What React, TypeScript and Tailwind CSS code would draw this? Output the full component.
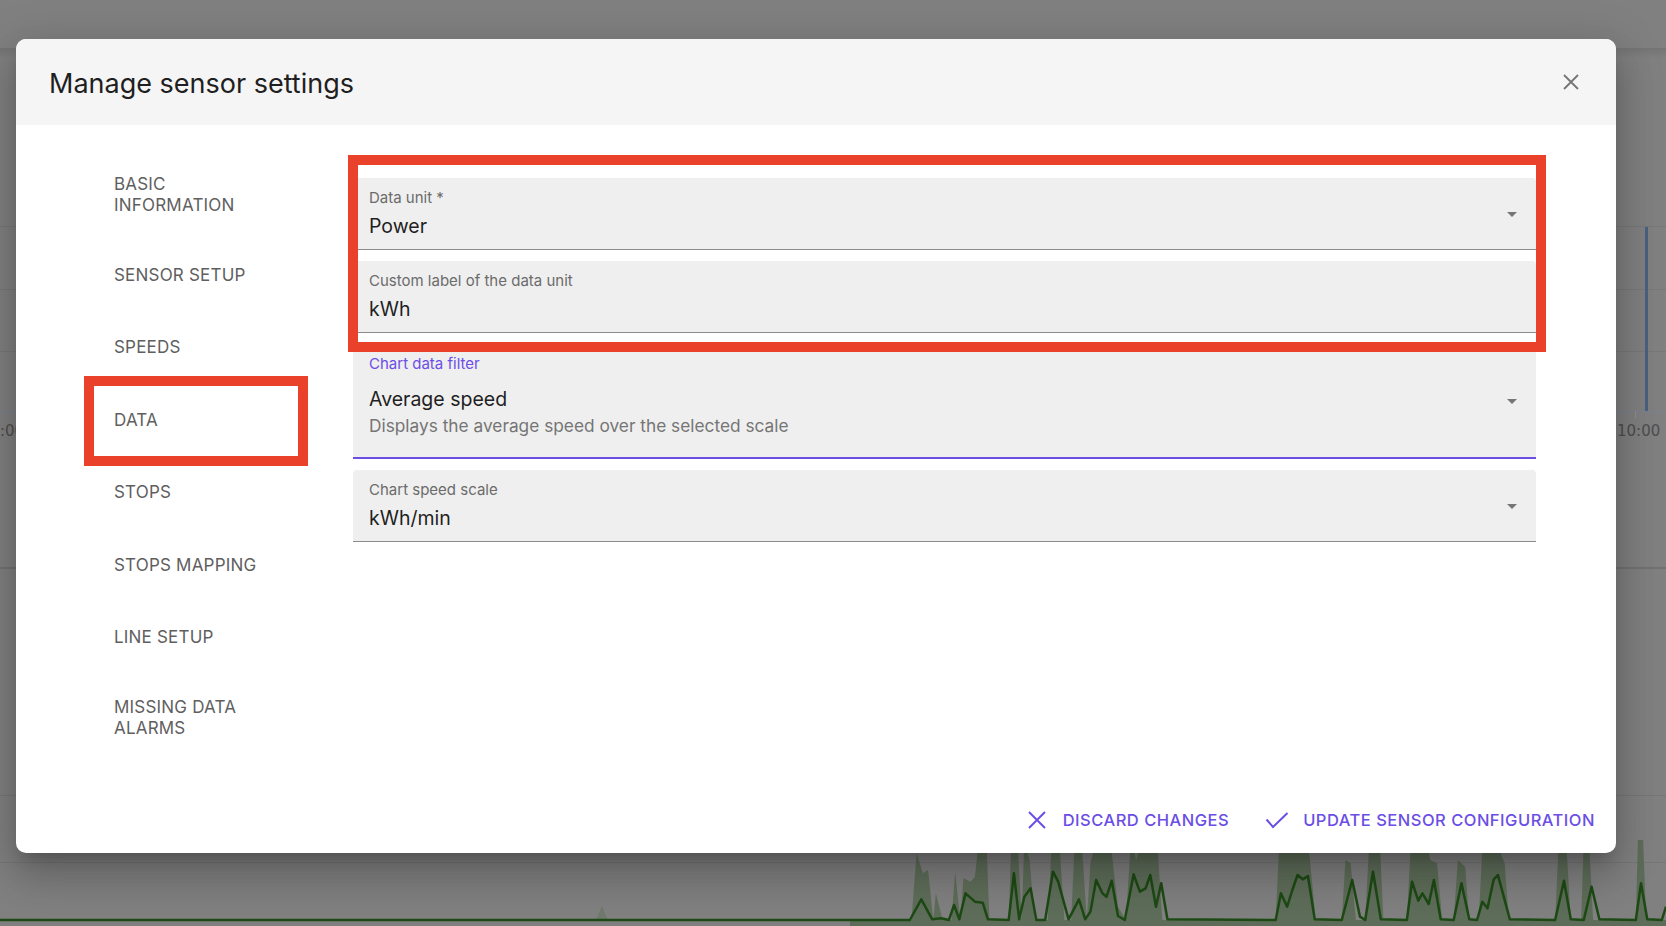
import React from "react";

const navItems = [
  "BASIC INFORMATION",
  "SENSOR SETUP",
  "SPEEDS",
  "DATA",
  "STOPS",
  "STOPS MAPPING",
  "LINE SETUP",
  "MISSING DATA ALARMS",
];

// chart line, in the coords of a 1568x258 box (scaled into 816x86)
const linePts: [number, number][] = [
  [0, 240], [115, 240], [137, 178], [158, 238], [175, 235], [190, 240], [200, 195], [210, 238], [222, 160], [240, 185],
  [255, 188], [265, 238], [305, 240], [315, 100], [325, 238], [335, 170], [347, 145], [358, 240], [375, 240], [390, 95],
  [400, 125], [420, 238], [440, 178], [452, 238], [462, 215], [473, 120], [485, 160], [493, 170], [503, 122], [515, 228],
  [528, 240], [545, 103], [557, 155], [568, 145], [577, 105], [588, 200], [598, 130], [610, 238], [818, 240], [828, 160],
  [840, 200], [850, 150], [860, 105], [870, 118], [880, 108], [893, 238], [945, 240], [965, 120], [980, 230], [990, 240],
  [1005, 95], [1020, 238], [1070, 240], [1080, 125], [1092, 182], [1100, 160], [1112, 192], [1122, 120], [1135, 238],
  [1160, 240], [1175, 130], [1190, 238], [1205, 240], [1215, 185], [1225, 205], [1237, 118], [1245, 105], [1268, 238],
  [1355, 240], [1372, 122], [1385, 238], [1410, 240], [1425, 140], [1440, 238], [1510, 240], [1520, 130], [1532, 238],
  [1560, 240], [1568, 200],
];

const fillPts: [number, number][] = [
  [0, 242], [118, 240], [128, 40], [140, 100], [150, 90], [160, 240], [165, 160], [178, 240], [195, 240], [202, 95],
  [212, 240], [218, 115], [232, 125], [240, 110], [248, 0], [262, 0], [268, 240], [305, 240], [310, 0], [322, 0],
  [330, 240], [335, 0], [345, 60], [355, 240], [380, 240], [388, 0], [402, 0], [412, 240], [425, 240], [432, 0],
  [445, 0], [455, 240], [462, 70], [470, 20], [480, 0], [492, 40], [500, 0], [515, 200], [530, 240], [540, 0],
  [550, 60], [560, 0], [590, 0], [600, 240], [818, 240], [825, 0], [880, 0], [895, 240], [945, 240], [952, 60],
  [962, 70], [972, 240], [990, 240], [998, 0], [1018, 0], [1025, 240], [1070, 240], [1078, 0], [1108, 0], [1115, 60],
  [1128, 70], [1138, 240], [1160, 240], [1168, 60], [1182, 80], [1190, 240], [1208, 240], [1216, 0], [1240, 0],
  [1258, 70], [1266, 240], [1355, 240], [1362, 0], [1376, 0], [1385, 240], [1405, 240], [1410, 0], [1420, 0],
  [1428, 240], [1510, 240], [1514, 0], [1524, 0], [1530, 240], [1568, 240], [1568, 258], [0, 258],
];

const toStr = (pts: [number, number][]) => pts.map((p) => p.join(",")).join(" ");

function DropArrow() {
  return (
    <svg width="24" height="24" viewBox="0 0 24 24" className="shrink-0">
      <path d="M7 10l5 5 5-5z" fill="#757575" />
    </svg>
  );
}

function Field({
  label,
  value,
  helper,
  focused,
  select,
}: {
  label: string;
  value: string;
  helper?: string;
  focused?: boolean;
  select?: boolean;
}) {
  return (
    <div
      className={
        "flex items-center rounded-t-[4px] bg-[#efefef] pl-4 pr-[12px] " +
        (focused ? "border-b-2 border-[#6b4ee6]" : "border-b border-[#8c8c8c]")
      }
    >
      <div className={"flex-1 pt-[10px] " + (helper ? "pb-[20px]" : "pb-[11px]")}>
        <div className={"text-[15px] leading-5 " + (focused ? "text-[#6b4ee6]" : "text-[#6b6b6b]")}>{label}</div>
        <div className={"text-[19.5px] leading-6 text-[#1f1f1f] " + (helper ? "mt-[13px]" : "mt-[6px]")}>{value}</div>
        {helper && <div className="text-[17.3px] leading-[22px] text-[#757575] mt-[4px]">{helper}</div>}
      </div>
      {select && <DropArrow />}
    </div>
  );
}

export default function App() {
  return (
    <div className="relative h-[926px] w-[1666px] overflow-hidden bg-[#808080] font-['Inter','Liberation_Sans',sans-serif]">
      {/* page behind the dialog */}
      <div className="absolute left-0 right-0 top-[48px] h-[10px] bg-gradient-to-b from-[#747474] to-[#808080]" />
      <div className="absolute left-0 right-0 top-[226px] h-px bg-[#787878]" />
      <div className="absolute left-0 right-0 top-[289px] h-px bg-[#787878]" />
      <div className="absolute left-0 right-0 top-[351px] h-px bg-[#787878]" />
      <div className="absolute left-0 right-0 top-[411px] h-px bg-[#7b8290]" />
      <div className="absolute left-[1635px] top-[411px] h-[8px] w-px bg-[#8e8e8e]" />
      <div className="absolute left-[1645px] top-[227px] h-[184px] w-[3px] bg-[#4b5f80]" />
      <div className="absolute left-[1617px] top-[420px] text-[15px] text-[#4e4e4e] font-['DejaVu_Sans',sans-serif]">10:00</div>
      <div className="absolute left-0 top-[420px] text-[15px] text-[#4e4e4e] font-['DejaVu_Sans',sans-serif]">:00</div>
      <div className="absolute left-0 right-0 top-[567px] h-[2px] bg-[#727272]" />
      <div className="absolute left-0 right-0 top-[795px] h-px bg-[#777777]" />
      <div className="absolute left-0 right-0 top-[862px] h-px bg-[#777777]" />
      <svg className="absolute left-0 top-[840px]" width="850" height="86" viewBox="0 0 850 86">
        <path d="M596 80 L602 66 L608 80 Z" fill="#6f7a6c" />
        <polyline points="0,80 850,80" fill="none" stroke="#1d4a14" strokeWidth="2.5" />
      </svg>
      <svg
        className="absolute left-[850px] top-[840px]"
        width="816"
        height="86"
        viewBox="0 0 1568 258"
        preserveAspectRatio="none"
      >
        <polygon points={toStr(fillPts)} fill="#5e6d59" />
        <polyline
          points={toStr(linePts)}
          fill="none"
          stroke="#1d4a14"
          strokeWidth="2.5"
          vectorEffect="non-scaling-stroke"
          strokeLinejoin="round"
        />
      </svg>

      {/* dialog */}
      <div className="absolute left-[16px] top-[39px] flex h-[814px] w-[1600px] flex-col overflow-hidden rounded-[10px] bg-white shadow-[0_11px_15px_-7px_rgba(0,0,0,0.2),0_24px_38px_3px_rgba(0,0,0,0.14),0_9px_46px_8px_rgba(0,0,0,0.12)]">
        <div className="flex h-[86px] shrink-0 items-center justify-between bg-[#f5f5f5] pl-[33px] pr-[33px]">
          <h2 className="pt-[4px] text-[27px] font-normal text-[#1f1f1f]">Manage sensor settings</h2>
          <button className="flex h-6 w-6 items-center justify-center">
            <svg width="24" height="24" viewBox="0 0 24 24">
              <path d="M5 5 L19 19 M19 5 L5 19" stroke="#757575" strokeWidth="1.8" />
            </svg>
          </button>
        </div>

        <div className="flex flex-1 pl-[80px] pr-[80px]">
          {/* side nav */}
          <nav className="w-[200px] shrink-0 pt-[26px]">
            {navItems.map((item) => (
              <div
                key={item}
                className="relative flex min-h-[72.5px] items-center py-[23px] pl-[18px] pr-6 text-[17px] leading-[21px] tracking-[0.2px] text-[#5f5f5f]"
              >
                <span className="max-w-[150px]">{item}</span>
                {item === "DATA" && (
                  <div className="pointer-events-none absolute -bottom-[9px] -left-[12px] -right-[12px] -top-[8px] border-[10px] border-[#e9412a]" />
                )}
              </div>
            ))}
          </nav>

          {/* fields */}
          <div className="relative ml-[57px] flex flex-1 flex-col gap-[11px] pt-[53px]">
            <Field label="Data unit *" value="Power" select />
            <Field label="Custom label of the data unit" value="kWh" />
            <Field
              label="Chart data filter"
              value="Average speed"
              helper="Displays the average speed over the selected scale"
              focused
              select
            />
            <Field label="Chart speed scale" value="kWh/min" select />
            <div className="pointer-events-none absolute left-[-5px] top-[30px] h-[197px] w-[1198px] border-[10px] border-[#e9412a]" />
          </div>
        </div>

        {/* footer */}
        <div className="flex shrink-0 items-center justify-end gap-[36px] pb-[15px] pr-[21px]">
          <button className="flex h-9 items-center gap-[14px] text-[16.5px] font-medium tracking-[0.5px] text-[#6b4ee6]">
            <svg width="24" height="24" viewBox="0 0 24 24">
              <path d="M4 4 L20 20 M20 4 L4 20" stroke="#6b4ee6" strokeWidth="2" />
            </svg>
            DISCARD CHANGES
          </button>
          <button className="flex h-9 items-center gap-[14px] text-[16.5px] font-medium tracking-[0.5px] text-[#6b4ee6]">
            <svg width="24" height="24" viewBox="0 0 24 24">
              <polyline points="1.5,11.5 8,19 22.5,5" fill="none" stroke="#6b4ee6" strokeWidth="2" />
            </svg>
            UPDATE SENSOR CONFIGURATION
          </button>
        </div>
      </div>
    </div>
  );
}
